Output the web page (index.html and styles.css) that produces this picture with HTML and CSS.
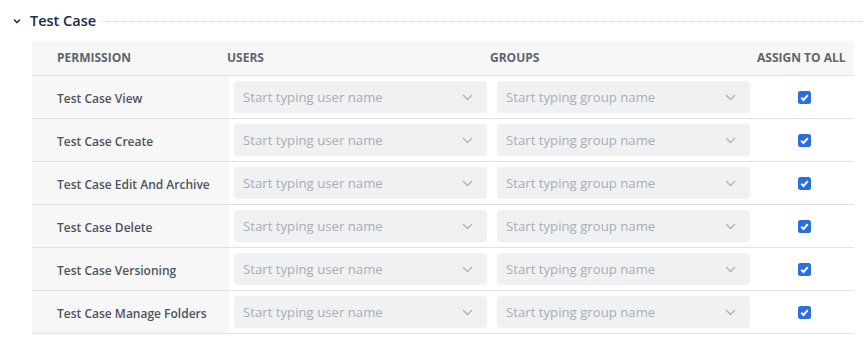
FILE: index.html
```html
<!DOCTYPE html>
<html lang="en">
<head>
  <meta charset="UTF-8">
  <title>Permissions - Test Case</title>
  <link rel="stylesheet" href="styles.css">
</head>
<body>
  <!-- Section header -->
  <div class="section-head">
    <svg class="toggle" width="8" height="6" viewBox="0 0 8 6"><path d="M1 1.5 L4 4.5 L7 1.5" fill="none" stroke="#253858" stroke-width="1.6"/></svg>
    <h2>Test Case</h2>
    <div class="rule"></div>
  </div>

  <!-- Permissions table -->
  <table class="perm-table">
    <thead>
      <tr>
        <th class="col-perm">Permission</th>
        <th class="col-users">Users</th>
        <th class="col-groups">Groups</th>
        <th class="col-all">Assign to all</th>
      </tr>
    </thead>
    <tbody id="perm-body"></tbody>
  </table>

  <script>
    const permissions = [
      'Test Case View',
      'Test Case Create',
      'Test Case Edit And Archive',
      'Test Case Delete',
      'Test Case Versioning',
      'Test Case Manage Folders'
    ];

    const chevron = '<svg class="chev" width="11" height="7" viewBox="0 0 11 7"><path d="M1 1 L5.5 5.5 L10 1" fill="none" stroke="#aeb2b9" stroke-width="1.3"/></svg>';
    const check = '<svg width="13" height="13" viewBox="0 0 13 13"><rect width="13" height="13" rx="2.5" fill="#2a6fdb"/><path d="M3.2 6.8 L5.5 9 L9.8 4.2" fill="none" stroke="#fff" stroke-width="2"/></svg>';

    const body = document.getElementById('perm-body');
    permissions.forEach(name => {
      const row = document.createElement('tr');
      row.innerHTML = `
        <td class="col-perm">${name}</td>
        <td><div class="select"><span>Start typing user name</span>${chevron}</div></td>
        <td><div class="select"><span>Start typing group name</span>${chevron}</div></td>
        <td class="col-all">${check}</td>`;
      body.appendChild(row);
    });
  </script>
</body>
</html>
```

FILE: styles.css
```css
/* Basic Reset */
* {
  margin: 0;
  padding: 0;
  box-sizing: border-box;
}

body {
  font-family: "Open Sans", Arial, sans-serif;
  background: #fff;
  color: #172b4d;
  padding: 10px 2px 0 13px;
}

.section-head {
  display: flex;
  align-items: center;
  height: 21px;
}

.section-head .toggle {
  margin-right: 9px;
}

.section-head h2 {
  font-size: 14.5px;
  font-weight: 600;
  color: #172b4d;
  margin-right: 6px;
}

.section-head .rule {
  flex: 1;
  border-top: 1px dotted #c8c8c8;
  margin-top: 1px;
}

.perm-table {
  margin: 10px 0 0 19px;
  border-collapse: collapse;
  table-layout: fixed;
  width: 822px;
}

.perm-table th {
  height: 34px;
  background: #f7f7f7;
  border-bottom: 1px solid #dfe1e4;
  font-size: 12px;
  font-weight: 700;
  color: #5e6470;
  text-transform: uppercase;
  text-align: left;
  padding: 0;
  text-indent: -2px;
}

.perm-table th.col-perm {
  width: 197px;
  padding-left: 25px;
  text-indent: 0;
}

.perm-table th.col-users,
.perm-table th.col-groups {
  width: 263px;
}

.perm-table th.col-all {
  width: 99px;
  text-indent: 2px;
}

.perm-table td {
  height: 43px;
  padding: 5px;
  border-bottom: 1px solid #dfe1e4;
}

.perm-table td.col-perm {
  background: #f7f7f7;
  padding: 8px 5px 4px 25px;
  font-size: 12px;
  font-weight: 600;
  color: #4d5360;
}

.perm-table td.col-all {
  text-align: center;
  padding-top: 7px;
}

.select {
  display: flex;
  align-items: center;
  justify-content: space-between;
  height: 32px;
  padding: 0 14px 0 9px;
  background: #f0f1f3;
  border-radius: 4px;
  font-size: 13.2px;
  color: #a9aeb6;
}

.select .chev {
  margin-top: 1px;
}
```
